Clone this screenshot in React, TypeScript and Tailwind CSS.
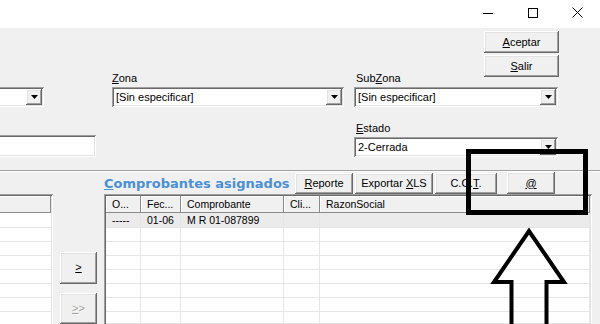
import React from "react";

const raised =
  "shadow-[inset_-1px_-1px_#696969,inset_1px_1px_#ffffff,inset_-2px_-2px_#a0a0a0,inset_2px_2px_#e3e3e3]";
const sunken =
  "shadow-[inset_1px_1px_#a0a0a0,inset_-1px_-1px_#ffffff,inset_2px_2px_#696969,inset_-2px_-2px_#e3e3e3]";

function Btn({
  children,
  className = "",
}: {
  children: React.ReactNode;
  className?: string;
}) {
  return (
    <div
      className={`flex items-center justify-center bg-[#f0f0f0] leading-none ${raised} ${className}`}
    >
      {children}
    </div>
  );
}

function Arrow() {
  return (
    <div
      className={`flex h-[16px] w-[16px] items-center justify-center bg-[#f0f0f0] ${raised}`}
    >
      <svg width="7" height="4" viewBox="0 0 7 4">
        <path d="M0 0H7L3.5 4Z" fill="#000" />
      </svg>
    </div>
  );
}

function Combo({ text, className = "" }: { text: string; className?: string }) {
  return (
    <div className={`flex h-[20px] bg-white p-[2px] ${sunken} ${className}`}>
      <div className="flex-1 pl-[2px] text-[11px] leading-[16px]">{text}</div>
      <Arrow />
    </div>
  );
}

const cols = [
  { w: "w-[35px]", h: "O...", d: "-----" },
  { w: "w-[40px]", h: "Fec...", d: "01-06" },
  { w: "w-[103px]", h: "Comprobante", d: "M R 01-087899" },
  { w: "w-[36px]", h: "Cli...", d: "" },
  { w: "flex-1", h: "RazonSocial", d: "" },
];

const headCell =
  "h-[17px] bg-[#f0f0f0] pl-[6px] leading-[17px] shadow-[inset_-1px_-1px_#8a8a8a,inset_1px_1px_#ffffff] whitespace-nowrap overflow-hidden";

export default function App() {
  const rows = [0, 1, 2, 3, 4, 5, 6, 7];
  return (
    <div className="relative h-[324px] w-[600px] overflow-hidden bg-[#f0f0f0] font-['Liberation_Sans',Arial,sans-serif] text-[11px] text-black">
      {/* title bar */}
      <div className="flex h-[28px] justify-end bg-white">
        <div className="flex w-[45px] items-start justify-center pt-[13px]">
          <div className="h-px w-[10px] bg-black" />
        </div>
        <div className="flex w-[45px] items-start justify-center pt-[8px]">
          <div className="h-[10px] w-[10px] border border-black" />
        </div>
        <div className="flex w-[45px] items-start justify-center pt-[7px]">
          <svg width="11" height="11" viewBox="0 0 11 11">
            <path d="M0.5 0.5L10.5 10.5M10.5 0.5L0.5 10.5" stroke="#000" strokeWidth="1" />
          </svg>
        </div>
      </div>

      {/* top buttons */}
      <div className="flex flex-col items-end gap-[2px] pr-[41px] pt-[3px]">
        <Btn className="h-[22px] w-[75px]">
          <span>
            <u className="underline-offset-[1px]">A</u>ceptar
          </span>
        </Btn>
        <Btn className="h-[22px] w-[75px]">
          <span>
            <u className="underline-offset-[1px]">S</u>alir
          </span>
        </Btn>
      </div>

      {/* fields */}
      <div className="-mt-[6px] flex h-[99px]">
        <div className="flex w-[96px] flex-col pt-[16px]">
          <Combo text="" className="-ml-[16px] w-[60px]" />
          <div className={`-ml-[10px] mt-[28px] h-[22px] w-[106px] bg-white ${sunken}`} />
        </div>
        <div className="ml-[16px] flex w-[232px] flex-col">
          <div className="h-[14px] leading-[14px]">
            <u className="underline-offset-[1px]">Z</u>ona
          </div>
          <Combo text="[Sin especificar]" className="mt-[2px]" />
        </div>
        <div className="ml-[10px] flex w-[204px] flex-col">
          <div className="h-[14px] pl-[2px] leading-[14px]">
            Sub<u className="underline-offset-[1px]">Z</u>ona
          </div>
          <Combo text="[Sin especificar]" className="mt-[2px]" />
          <div className="mt-[14px] h-[14px] pl-[2px] leading-[14px]">
            <u className="underline-offset-[1px]">E</u>stado
          </div>
          <Combo text="2-Cerrada" className="mt-[2px]" />
        </div>
      </div>

      {/* lower section */}
      <div className="flex h-[154px] border-t border-t-[#a0a0a0] shadow-[inset_0_1px_#ffffff]">
        {/* left grid */}
        <div className="w-[53px] pt-[23px]">
          <div className={`-ml-[10px] h-[140px] w-[63px] bg-white p-[2px] ${sunken}`}>
            <div className={headCell} />
            {rows.map((r) => (
              <div
                key={r}
                className={`${r === 0 ? "h-[15px]" : "h-[14px]"} border-b border-b-[#e6e6e6]`}
              />
            ))}
          </div>
        </div>

        {/* middle buttons */}
        <div className="flex w-[51px] flex-col gap-[9px] pl-[7px] pt-[81px]">
          <Btn className="h-[36px] w-[37px] text-[11px]">
            <u className="underline-offset-[1px]">&gt;</u>
          </Btn>
          <Btn className="h-[36px] w-[37px] text-[11px] text-[#a0a0a0] [text-shadow:1px_1px_#ffffff]">
            <span>
              <u className="underline-offset-[1px]">&gt;</u>&gt;
            </span>
          </Btn>
        </div>

        {/* right panel */}
        <div className="flex w-[489px] flex-col">
          <div className="flex h-[23px] items-start">
            <div className="flex h-[23px] w-[191px] items-end pb-[2px]">
              <span className="font-['DejaVu_Sans',Verdana,sans-serif] text-[13px] font-bold leading-[16px] text-[#4b8fd5]">
                <u className="underline-offset-[1px]">C</u>omprobantes asignados
              </span>
            </div>
            <Btn className="mt-[2px] h-[21px] w-[58px]">
              <span>
                <u className="underline-offset-[1px]">R</u>eporte
              </span>
            </Btn>
            <Btn className="ml-[2px] mt-[2px] h-[21px] w-[78px]">
              <span>
                Exportar <u className="underline-offset-[1px]">X</u>LS
              </span>
            </Btn>
            <Btn className="ml-[2px] mt-[2px] h-[21px] w-[62px]">
              <span>
                C.O.<u className="underline-offset-[1px]">T</u>.
              </span>
            </Btn>
            <Btn className="ml-[10px] mt-[1px] h-[22px] w-[48px]">
              <u className="underline-offset-[1px]">@</u>
            </Btn>
          </div>

          <div className={`h-[131px] w-[488px] bg-white p-[2px] ${sunken}`}>
            <div className="flex">
              {cols.map((c, i) => (
                <div key={i} className={`${c.w} ${headCell} text-[10.5px]`}>
                  {c.h}
                </div>
              ))}
            </div>
            {rows.map((r) => (
              <div
                key={r}
                className={`flex ${r === 0 ? "h-[15px] bg-[#ebebeb]" : "h-[14px]"} border-b border-b-[#e6e6e6]`}
              >
                {cols.map((c, i) => (
                  <div
                    key={i}
                    className={`${c.w} border-r border-r-[#e6e6e6] pl-[6px] text-[10.5px] leading-[15px] whitespace-nowrap`}
                  >
                    {r === 0 ? c.d : ""}
                  </div>
                ))}
              </div>
            ))}
          </div>
        </div>
      </div>

      {/* annotation overlay */}
      <svg
        className="pointer-events-none absolute left-0 top-0"
        width="600"
        height="324"
        viewBox="0 0 600 324"
      >
        <rect x="468.5" y="151.5" width="117" height="61" fill="none" stroke="#000" strokeWidth="5" />
        <polyline
          points="511.5,330 511.5,282 494,282 529,231 564,282 546.5,282 546.5,330"
          fill="none"
          stroke="#000"
          strokeWidth="4"
          strokeLinejoin="miter"
        />
      </svg>
    </div>
  );
}
